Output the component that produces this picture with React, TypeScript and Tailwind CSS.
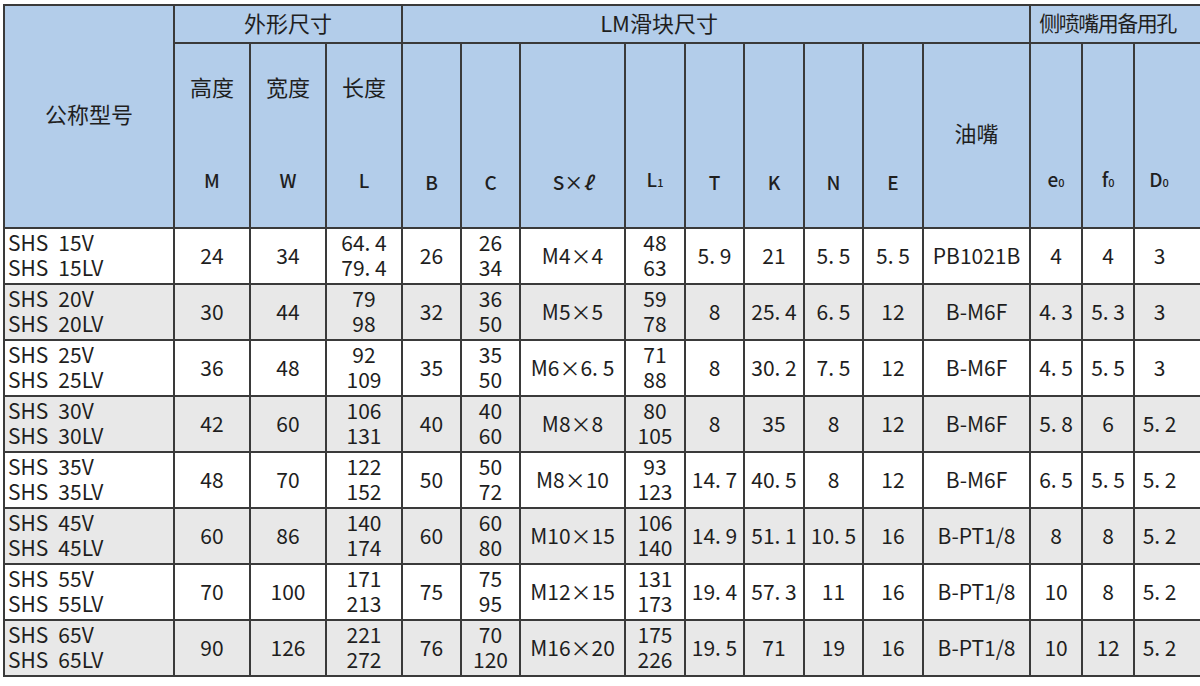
import React from "react";

type Row = {
  model: [string, string];
  m: string;
  w: string;
  l: [string, string];
  b: string;
  c: [string, string];
  s: string;
  l1: [string, string];
  t: string;
  k: string;
  n: string;
  e: string;
  oil: string;
  e0: string;
  f0: string;
  d0: string;
};

const rows: Row[] = [
  { model: ["15V", "15LV"], m: "24", w: "34", l: ["64. 4", "79. 4"], b: "26", c: ["26", "34"], s: "M4×4", l1: ["48", "63"], t: "5. 9", k: "21", n: "5. 5", e: "5. 5", oil: "PB1021B", e0: "4", f0: "4", d0: "3" },
  { model: ["20V", "20LV"], m: "30", w: "44", l: ["79", "98"], b: "32", c: ["36", "50"], s: "M5×5", l1: ["59", "78"], t: "8", k: "25. 4", n: "6. 5", e: "12", oil: "B-M6F", e0: "4. 3", f0: "5. 3", d0: "3" },
  { model: ["25V", "25LV"], m: "36", w: "48", l: ["92", "109"], b: "35", c: ["35", "50"], s: "M6×6. 5", l1: ["71", "88"], t: "8", k: "30. 2", n: "7. 5", e: "12", oil: "B-M6F", e0: "4. 5", f0: "5. 5", d0: "3" },
  { model: ["30V", "30LV"], m: "42", w: "60", l: ["106", "131"], b: "40", c: ["40", "60"], s: "M8×8", l1: ["80", "105"], t: "8", k: "35", n: "8", e: "12", oil: "B-M6F", e0: "5. 8", f0: "6", d0: "5. 2" },
  { model: ["35V", "35LV"], m: "48", w: "70", l: ["122", "152"], b: "50", c: ["50", "72"], s: "M8×10", l1: ["93", "123"], t: "14. 7", k: "40. 5", n: "8", e: "12", oil: "B-M6F", e0: "6. 5", f0: "5. 5", d0: "5. 2" },
  { model: ["45V", "45LV"], m: "60", w: "86", l: ["140", "174"], b: "60", c: ["60", "80"], s: "M10×15", l1: ["106", "140"], t: "14. 9", k: "51. 1", n: "10. 5", e: "16", oil: "B-PT1/8", e0: "8", f0: "8", d0: "5. 2" },
  { model: ["55V", "55LV"], m: "70", w: "100", l: ["171", "213"], b: "75", c: ["75", "95"], s: "M12×15", l1: ["131", "173"], t: "19. 4", k: "57. 3", n: "11", e: "16", oil: "B-PT1/8", e0: "10", f0: "8", d0: "5. 2" },
  { model: ["65V", "65LV"], m: "90", w: "126", l: ["221", "272"], b: "76", c: ["70", "120"], s: "M16×20", l1: ["175", "226"], t: "19. 5", k: "71", n: "19", e: "16", oil: "B-PT1/8", e0: "10", f0: "12", d0: "5. 2" },
];

const widths = [170, 76, 76, 76, 59, 59, 105, 60, 59, 60, 59, 60, 107, 52, 52, 67];

const bd = "border-2 border-[#3a3a3a]";
const th = `${bd} bg-[#b3cdea] p-0 font-normal text-[#1f1f1f] whitespace-nowrap overflow-hidden`;
const td = `${bd} p-0 pb-[2px] text-center align-middle leading-[25px] whitespace-pre`;

function Two({ v }: { v: [string, string] }) {
  return (
    <div className="flex flex-col items-center">
      <span>{v[0]}</span>
      <span>{v[1]}</span>
    </div>
  );
}

function SubHead({ zh, en }: { zh: string; en: React.ReactNode }) {
  return (
    <th className={`${th} align-top`}>
      <div className="flex h-[181px] flex-col items-center justify-between pt-[28px] pb-[33px]">
        <span className="text-[22px] leading-[28px]">{zh}</span>
        <span className="text-[19px] font-medium leading-[24px]">{en}</span>
      </div>
    </th>
  );
}

function LetterHead({ children, extra = "" }: { children: React.ReactNode; extra?: string }) {
  return (
    <th className={`${th} align-bottom`}>
      <div className={`pb-[33px] text-[19px] font-medium leading-[24px] ${extra}`}>{children}</div>
    </th>
  );
}

export default function App() {
  return (
    <div className="h-[686px] w-[1200px] overflow-hidden bg-white font-['Noto_Sans_CJK_SC',sans-serif] text-[#1e1e1e]">
      <table className="ml-[3px] mt-[4px] table-fixed border-collapse" style={{ width: 1197 }}>
        <colgroup>
          {widths.map((w, i) => (
            <col key={i} style={{ width: w }} />
          ))}
        </colgroup>
        <thead>
          <tr>
            <th rowSpan={2} className={`${th} align-middle text-[22px] leading-[28px]`}>
              <div className="pb-[8px]">公称型号</div>
            </th>
            <th colSpan={3} className={`${th} h-[38px] pb-[5px] text-[22px] leading-[28px]`}>
              外形尺寸
            </th>
            <th colSpan={9} className={`${th} h-[38px] pb-[5px] pr-[114px] text-[22px] leading-[28px]`}>
              LM滑块尺寸
            </th>
            <th colSpan={3} className={`${th} h-[38px] border-r-0 pb-[5px] pr-[17px] text-[21px] leading-[28px] tracking-[-1.5px]`}>
              侧喷嘴用备用孔
            </th>
          </tr>
          <tr>
            <SubHead zh="高度" en="M" />
            <SubHead zh="宽度" en="W" />
            <SubHead zh="长度" en="L" />
            <LetterHead>B</LetterHead>
            <LetterHead>C</LetterHead>
            <LetterHead>
              S×<span className="italic">ℓ</span>
            </LetterHead>
            <LetterHead>
              L<span className="text-[11px]">1</span>
            </LetterHead>
            <LetterHead>T</LetterHead>
            <LetterHead>K</LetterHead>
            <LetterHead>N</LetterHead>
            <LetterHead>E</LetterHead>
            <th className={`${th} h-[185px] pb-[8px] align-middle text-[22px] leading-[28px]`}>油嘴</th>
            <LetterHead>
              e<span className="text-[11px]">0</span>
            </LetterHead>
            <LetterHead>
              f<span className="text-[11px]">0</span>
            </LetterHead>
            <LetterHead extra="pr-[17px]">
              D<span className="text-[11px]">0</span>
            </LetterHead>
          </tr>
        </thead>
        <tbody className="text-[21px]">
          {rows.map((r, i) => (
            <tr key={i} className={i % 2 === 1 ? "bg-[#e8e8e8]" : "bg-white"}>
              <td className={`${td} h-[56px] text-left`}>
                <div className="flex flex-col pl-[3px]">
                  <div className="flex gap-[10px]">
                    <span>SHS</span>
                    <span>{r.model[0]}</span>
                  </div>
                  <div className="flex gap-[10px]">
                    <span>SHS</span>
                    <span>{r.model[1]}</span>
                  </div>
                </div>
              </td>
              <td className={td}>{r.m}</td>
              <td className={td}>{r.w}</td>
              <td className={td}>
                <Two v={r.l} />
              </td>
              <td className={td}>{r.b}</td>
              <td className={td}>
                <Two v={r.c} />
              </td>
              <td className={td}>{r.s}</td>
              <td className={td}>
                <Two v={r.l1} />
              </td>
              <td className={td}>{r.t}</td>
              <td className={td}>{r.k}</td>
              <td className={td}>{r.n}</td>
              <td className={td}>{r.e}</td>
              <td className={td}>{r.oil}</td>
              <td className={td}>{r.e0}</td>
              <td className={td}>{r.f0}</td>
              <td className={`${td} border-r-0 pr-[17px]`}>{r.d0}</td>
            </tr>
          ))}
        </tbody>
      </table>
    </div>
  );
}
